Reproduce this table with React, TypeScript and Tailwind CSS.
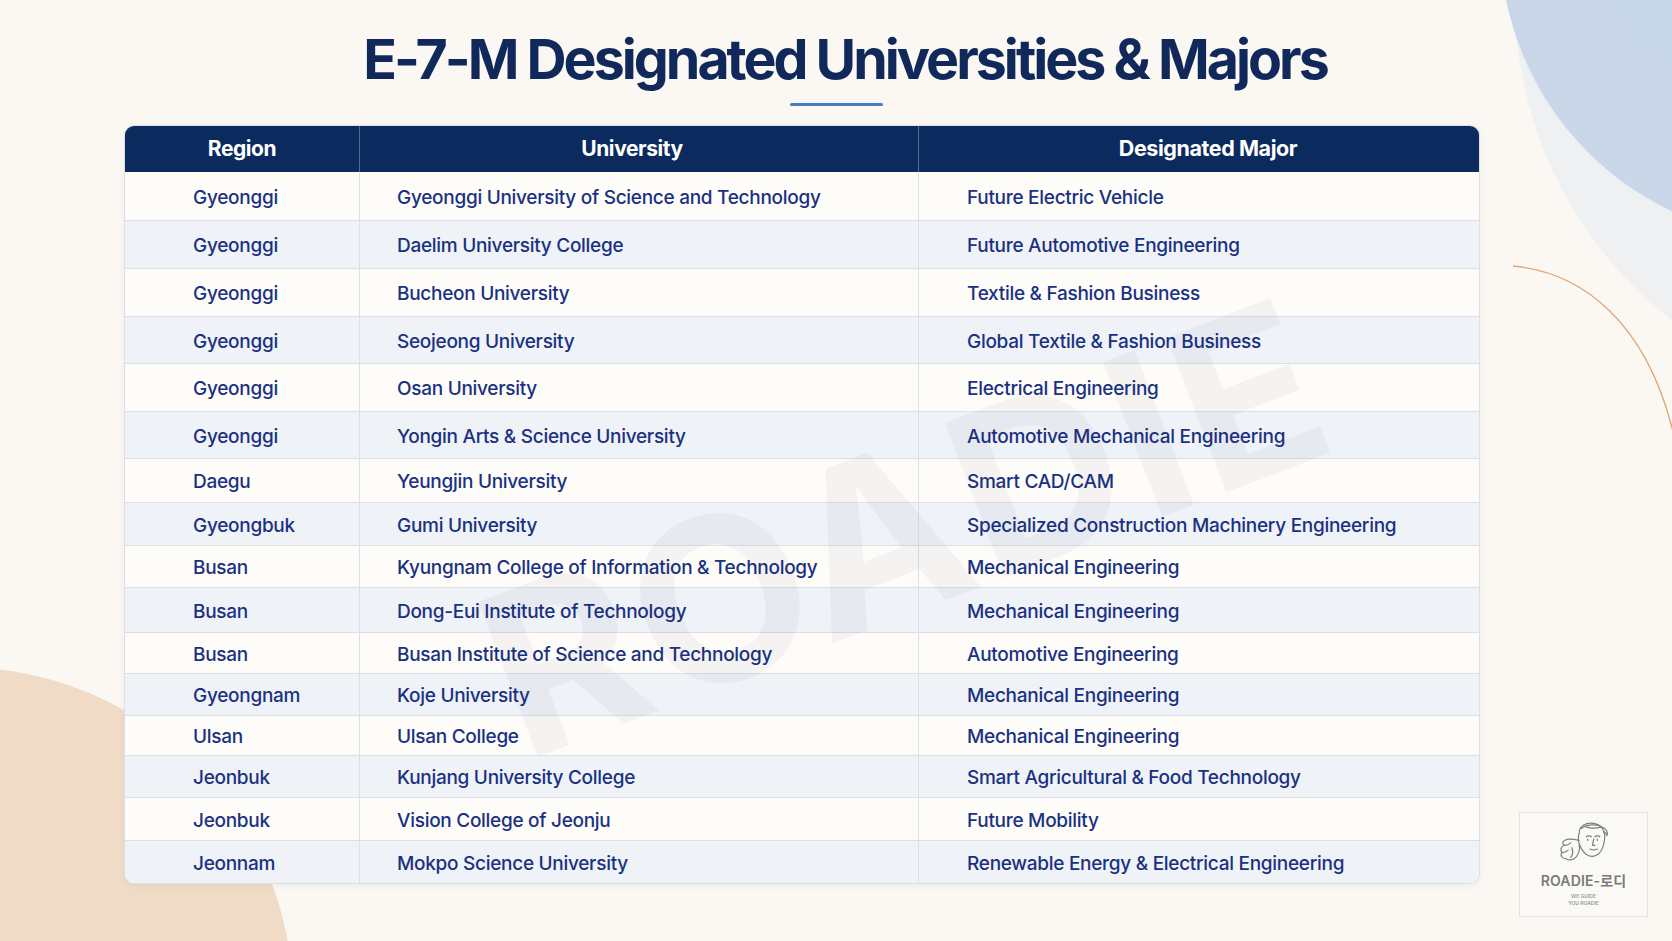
import React from "react";

type Row = [string, string, string, number];

const rows: Row[] = [
  ["Gyeonggi", "Gyeonggi University of Science and Technology", "Future Electric Vehicle", 49],
  ["Gyeonggi", "Daelim University College", "Future Automotive Engineering", 48],
  ["Gyeonggi", "Bucheon University", "Textile & Fashion Business", 48],
  ["Gyeonggi", "Seojeong University", "Global Textile & Fashion Business", 47],
  ["Gyeonggi", "Osan University", "Electrical Engineering", 48],
  ["Gyeonggi", "Yongin Arts & Science University", "Automotive Mechanical Engineering", 47],
  ["Daegu", "Yeungjin University", "Smart CAD/CAM", 44],
  ["Gyeongbuk", "Gumi University", "Specialized Construction Machinery Engineering", 43],
  ["Busan", "Kyungnam College of Information & Technology", "Mechanical Engineering", 42],
  ["Busan", "Dong-Eui Institute of Technology", "Mechanical Engineering", 45],
  ["Busan", "Busan Institute of Science and Technology", "Automotive Engineering", 41],
  ["Gyeongnam", "Koje University", "Mechanical Engineering", 42],
  ["Ulsan", "Ulsan College", "Mechanical Engineering", 40],
  ["Jeonbuk", "Kunjang University College", "Smart Agricultural & Food Technology", 42],
  ["Jeonbuk", "Vision College of Jeonju", "Future Mobility", 43],
  ["Jeonnam", "Mokpo Science University", "Renewable Energy & Electrical Engineering", 42],
];

function Background() {
  return (
    <svg
      className="absolute inset-0 pointer-events-none"
      width="1672"
      height="941"
      viewBox="0 0 1672 941"
    >
      <defs>
        <radialGradient id="blueg" cx="0.6" cy="0.3" r="0.7">
          <stop offset="0" stopColor="#c2d3e8" />
          <stop offset="1" stopColor="#c9d7e8" />
        </radialGradient>
      </defs>
      <circle cx="1920" cy="0" r="405" fill="#eef0f2" />
      <circle cx="1800" cy="-60" r="300" fill="url(#blueg)" />
      <path
        d="M1513 266 C 1580 272, 1648 320, 1675 440"
        fill="none"
        stroke="#e2a876"
        strokeWidth="1.4"
      />
      <circle cx="-40" cy="1000" r="333" fill="#f0dcc6" />
    </svg>
  );
}

function LogoFace() {
  return (
    <svg width="68" height="51" viewBox="0 0 56 42" fill="none" stroke="#7f7f7f" strokeWidth="1" strokeLinecap="round" strokeLinejoin="round">
      <path d="M24 10 C 24 4, 30 1, 36 2 C 42 3, 46 8, 45 15 C 44 22, 41 28, 36 29 C 31 30, 27 26, 25 21 C 23 17, 23 13, 24 10 Z" />
      <path d="M26 6 C 30 3, 38 2, 43 5 C 46 6, 48 9, 47 12 C 46 10, 45 9, 44 9" />
      <path d="M30 5 C 33 6, 38 6, 42 5" />
      <path d="M30 13 C 31 12, 33 12, 34 13" />
      <path d="M37 13 C 38 12, 40 12, 41 13" />
      <path d="M31 15 L 31 16" />
      <path d="M39 15 L 39 16" />
      <path d="M36 15 L 35 20 L 37 20" />
      <path d="M33 23 C 35 24, 37 24, 39 23" />
      <path d="M24 16 C 20 15, 15 14, 12 16 C 10 17, 10 19, 12 20 C 9 21, 8 24, 10 26 C 8 28, 10 31, 13 31 C 16 33, 20 32, 22 29 C 24 26, 25 23, 24 20" />
      <path d="M12 20 C 14 20, 16 19, 17 18" />
      <path d="M10 26 C 12 26, 14 25, 15 24" />
      <path d="M18 22 C 19 25, 19 28, 17 30" />
    </svg>
  );
}

export default function App() {
  const font = { fontFamily: "Inter, 'Noto Sans CJK KR', sans-serif" };
  return (
    <div
      className="relative w-[1672px] h-[941px] overflow-hidden bg-[#fbf8f3]"
      style={font}
    >
      <Background />

      <div className="relative flex flex-col">
        <div className="flex justify-center pt-[31px] pl-[18px]">
          <h1 className="text-[55.5px] leading-none font-bold tracking-[-0.054em] text-[#10295a] whitespace-nowrap">
            E-7-M Designated Universities &amp; Majors
          </h1>
        </div>
        <div className="flex justify-center mt-[16px]">
          <div className="w-[93px] h-[3px] bg-[#4b7cc2] rounded-full" />
        </div>

        <div className="ml-[124px] mt-[19px] w-[1356px] rounded-[10px] border border-[#dcdfe5] bg-[#fdfcf9] overflow-hidden shadow-[0_2px_6px_rgba(15,35,80,0.06)] relative">
          <div className="flex h-[46px] bg-[#0b2b5f] text-white text-[21px] font-bold tracking-[-0.02em]">
            <div className="w-[235px] border-r border-white/30 flex items-center justify-center">
              Region
            </div>
            <div className="w-[559px] border-r border-white/30 flex items-center justify-center pr-[14px]">
              University
            </div>
            <div className="flex-1 flex items-center justify-center pl-[18px] text-[21.5px]">
              Designated Major
            </div>
          </div>
          {rows.map((r, i) => (
            <div
              key={i}
              className={`flex text-[19px] font-medium text-[#1a3182] tracking-[-0.015em] ${
                i % 2 === 1 ? "bg-[#eff2f7]" : "bg-[#fdfcf9]"
              } ${i < rows.length - 1 ? "border-b border-[#dcdfe5]" : ""}`}
              style={{ height: r[3] }}
            >
              <div className="w-[235px] border-r border-[#dcdfe5] flex items-center pl-[68px] pt-[5px]">
                {r[0]}
              </div>
              <div className="w-[559px] border-r border-[#dcdfe5] flex items-center pl-[37px] pt-[5px]">
                {r[1]}
              </div>
              <div className="flex-1 flex items-center pl-[48px] pt-[5px]">{r[2]}</div>
            </div>
          ))}
        </div>
      </div>

      <div className="absolute left-[905px] top-[527px] -translate-x-1/2 -translate-y-1/2 -rotate-[21deg] pointer-events-none select-none text-[228px] font-bold leading-none text-[rgba(40,45,70,0.045)] tracking-[0.02em] whitespace-nowrap">
        ROADIE
      </div>

      <div className="absolute left-[1519px] top-[812px] w-[129px] h-[105px] border border-[#e6e3de] bg-[#fbf9f5] flex flex-col items-center pt-[8px]">
        <LogoFace />
        <div className="mt-[2px] text-[14px] font-semibold text-[#7a7a7a] leading-none tracking-[0.01em]">
          ROADIE-로디
        </div>
        <div className="mt-[5px] text-[5px] leading-[7px] text-[#9a9a9a] text-center font-semibold">
          WE GUIDE
          <br />
          YOU ROADIE
        </div>
      </div>
    </div>
  );
}
